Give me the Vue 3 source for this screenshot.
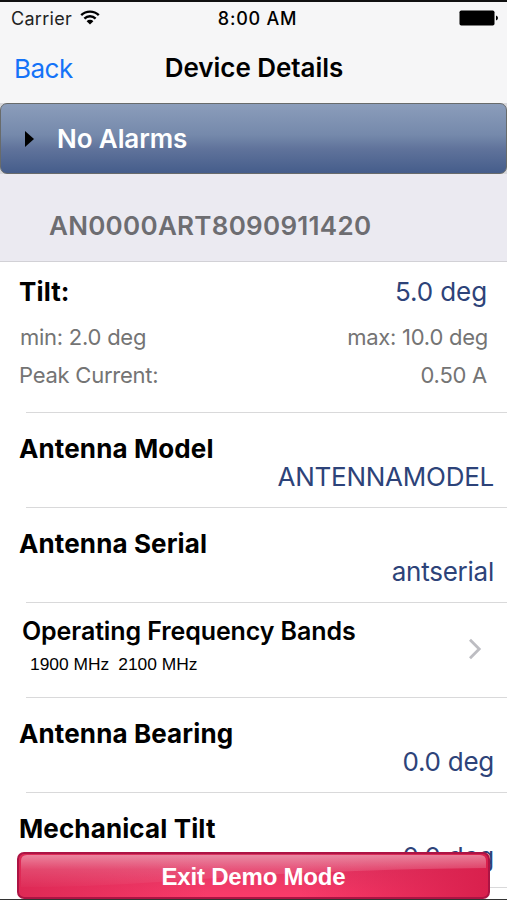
<script setup>
import { ref } from "vue";

const serialNumber = ref("AN0000ART8090911420");
const bands = ref(["1900 MHz", "2100 MHz"]);
</script>

<template>
  <div class="screen">
    <header class="top">
      <div class="status">
        <div class="carrier">
          <span class="carrier-name">Carrier</span>
          <svg class="wifi" viewBox="0 0 20 15" width="20" height="15">
            <path d="M1.2 5.2a12.5 12.5 0 0 1 17.6 0" />
            <path d="M4.4 8.6a8 8 0 0 1 11.2 0" />
            <path class="dot" d="M10 14.6 6.6 11.2a4.8 4.8 0 0 1 6.8 0z" />
          </svg>
        </div>
        <span class="time">8:00 AM</span>
        <svg class="battery" viewBox="0 0 40 16" width="40" height="16">
          <rect x="0.5" y="0.5" width="35" height="15" rx="1.8" />
          <path d="M37 5.5q2 .6 2 2.5t-2 2.5z" />
        </svg>
      </div>
      <nav class="nav">
        <button class="back">Back</button>
        <h1 class="title">Device Details</h1>
      </nav>
    </header>

    <div class="alarms-wrap">
      <button class="alarms">
        <span class="arrow"></span>
        <span class="alarms-text">No Alarms</span>
      </button>
    </div>

    <div class="device-id"><span>{{ serialNumber }}</span></div>

    <main class="list">
      <section class="row tilt">
        <div class="line"><b class="label">Tilt:</b><span class="value">5.0 deg</span></div>
        <div class="line range"><span class="min">min: 2.0 deg</span><span>max: 10.0 deg</span></div>
        <div class="line peak"><span>Peak Current:</span><span class="amps">0.50 A</span></div>
      </section>

      <section class="row">
        <b class="label">Antenna Model</b>
        <span class="value">ANTENNAMODEL</span>
      </section>

      <section class="row">
        <b class="label">Antenna Serial</b>
        <span class="value">antserial</span>
      </section>

      <section class="row bands">
        <div>
          <b class="label bands-label">Operating Frequency Bands</b>
          <div class="band-list">
            <span v-for="band in bands" :key="band">{{ band }}</span>
          </div>
        </div>
        <svg class="chevron" viewBox="0 0 14 22" width="14" height="22">
          <path d="M2 1.8 11.2 11 2 20.2" />
        </svg>
      </section>

      <section class="row">
        <b class="label">Antenna Bearing</b>
        <span class="value">0.0 deg</span>
      </section>

      <section class="row">
        <b class="label">Mechanical Tilt</b>
        <span class="value">0.0 deg</span>
      </section>
    </main>

    <button class="exit">
      <svg class="gloss" viewBox="0 0 465 38" preserveAspectRatio="none">
        <defs>
          <linearGradient id="shine" x1="0" y1="0" x2="0" y2="1">
            <stop offset="0" stop-color="#fff" stop-opacity="0.42" />
            <stop offset="0.45" stop-color="#fff" stop-opacity="0.14" />
            <stop offset="1" stop-color="#fff" stop-opacity="0.02" />
          </linearGradient>
        </defs>
        <path d="M0 6Q0 0 6 0H459Q465 0 465 6V13Q300 15 180 24T0 32Z" fill="url(#shine)" />
      </svg>
      <span class="exit-text">Exit Demo Mode</span>
    </button>
  </div>
</template>

<style>
body {
  margin: 0;
  background: #fff;
}
</style>

<style scoped>
.screen {
  position: relative;
  width: 507px;
  height: 900px;
  overflow: hidden;
  box-sizing: border-box;
  border-top: 2px solid #111;
  border-bottom: 1px solid #333;
  background: #fff;
  color: #000;
  font-family: Inter, "Liberation Sans", sans-serif;
  display: flex;
  flex-direction: column;
}

button {
  border: none;
  background: none;
  padding: 0;
  font-family: inherit;
  text-align: left;
  cursor: pointer;
}

.top {
  height: 101px;
  flex-shrink: 0;
  background: #f6f6f7;
}

.status {
  display: grid;
  grid-template-columns: 1fr auto 1fr;
  align-items: center;
  height: 32px;
  padding: 0 8px 0 11px;
  font-size: 18px;
}

.carrier {
  display: flex;
  align-items: center;
  gap: 8px;
}

.carrier-name {
  color: #222;
  letter-spacing: 0.3px;
}

.time {
  font-weight: 500;
  letter-spacing: 0.75px;
  padding-left: 5px;
}

.wifi {
  fill: none;
  stroke: #000;
  stroke-width: 2.4;
  margin-top: -2px;
}

.wifi .dot {
  fill: #000;
  stroke: none;
}

.battery {
  justify-self: end;
}

.nav {
  display: grid;
  grid-template-columns: 1fr auto 1fr;
  align-items: center;
  height: 68px;
  padding: 0 14px;
}

.back {
  color: #1473f8;
  font-size: 26px;
  letter-spacing: -0.5px;
}

.title {
  margin: -1px 0 0 1px;
  font-size: 26px;
  font-weight: 600;
  letter-spacing: -0.05px;
}

.alarms-wrap {
  flex-shrink: 0;
  background: #d8d8dc;
}

.alarms {
  display: flex;
  align-items: center;
  width: 100%;
  height: 71px;
  box-sizing: border-box;
  padding-left: 24px;
  border: 1px solid #686b6b;
  border-radius: 7px;
  background: linear-gradient(#8b9dbb, #7589ab 45%, #60739b 65%, #455d8b);
}

.arrow {
  border-left: 9px solid #000;
  border-top: 8px solid transparent;
  border-bottom: 8px solid transparent;
  margin-right: 23px;
}

.alarms-text {
  color: #fff;
  font-size: 26px;
  font-weight: 600;
  letter-spacing: -0.1px;
}

.device-id {
  display: flex;
  align-items: center;
  height: 88px;
  flex-shrink: 0;
  box-sizing: border-box;
  padding: 16px 0 0 49px;
  background: #ebeaf1;
  border-bottom: 1px solid #d2d1d6;
  color: #6d6d71;
  font-size: 26px;
  font-weight: 600;
  letter-spacing: 0.27px;
}

.row {
  position: relative;
  box-sizing: border-box;
  height: 95px;
  padding: 20px 13px 0 19px;
  display: flex;
  flex-direction: column;
}

/* separator is inset on the left only */
.row::after {
  content: "";
  position: absolute;
  left: 26px;
  right: 0;
  bottom: 0;
  height: 1px;
  background: #d9d9da;
}

.label {
  font-size: 26px;
  line-height: 32px;
  font-weight: 700;
  letter-spacing: 0.12px;
}

.value {
  align-self: flex-end;
  color: #2d4379;
  font-size: 26px;
  line-height: 32px;
  margin-top: -4px;
  letter-spacing: -0.25px;
}

.tilt {
  height: 151px;
  padding: 14px 19px 0;
  color: #747474;
  font-size: 22px;
  letter-spacing: -0.25px;
}

.tilt .label {
  color: #000;
}

.tilt .value {
  margin: 0 1px 0 0;
  letter-spacing: -0.1px;
}

.line {
  display: flex;
  justify-content: space-between;
}

.range {
  line-height: 28px;
  margin-top: 15px;
}

.min {
  margin-left: 1px;
}

.peak {
  line-height: 28px;
  margin-top: 10px;
}

.amps {
  margin-right: 1px;
}

.bands {
  flex-direction: row;
  justify-content: space-between;
  padding: 12px 25px 0 22px;
}

.bands-label {
  display: block;
  font-size: 25px;
  font-weight: 600;
}

.bands .bands-label {
  letter-spacing: -0.1px;
}

.band-list {
  display: flex;
  gap: 9px;
  padding: 5px 0 0 8px;
  font-family: "Liberation Sans", Arial, sans-serif;
  font-size: 17.4px;
  line-height: 24px;
}

.chevron {
  margin-top: 23px;
  fill: none;
  stroke: #bdbdc2;
  stroke-width: 2.8;
}

.exit {
  position: absolute;
  left: 17px;
  bottom: 0;
  width: 473px;
  height: 47px;
  box-sizing: border-box;
  border: 2px solid #ac1444;
  border-radius: 7px;
  background: linear-gradient(90deg, #de2955, transparent 40%, transparent 60%, #d9204d), linear-gradient(#d83561, #fa3b6a);
  display: flex;
  align-items: center;
  justify-content: center;
}

.gloss {
  position: absolute;
  left: 2px;
  top: 1px;
  width: 465px;
  height: 38px;
}

.exit-text {
  position: relative;
  top: 1px;
  color: #fff;
  font-family: "Liberation Sans", Arial, sans-serif;
  font-size: 24px;
  font-weight: 700;
  letter-spacing: -0.2px;
}
</style>
